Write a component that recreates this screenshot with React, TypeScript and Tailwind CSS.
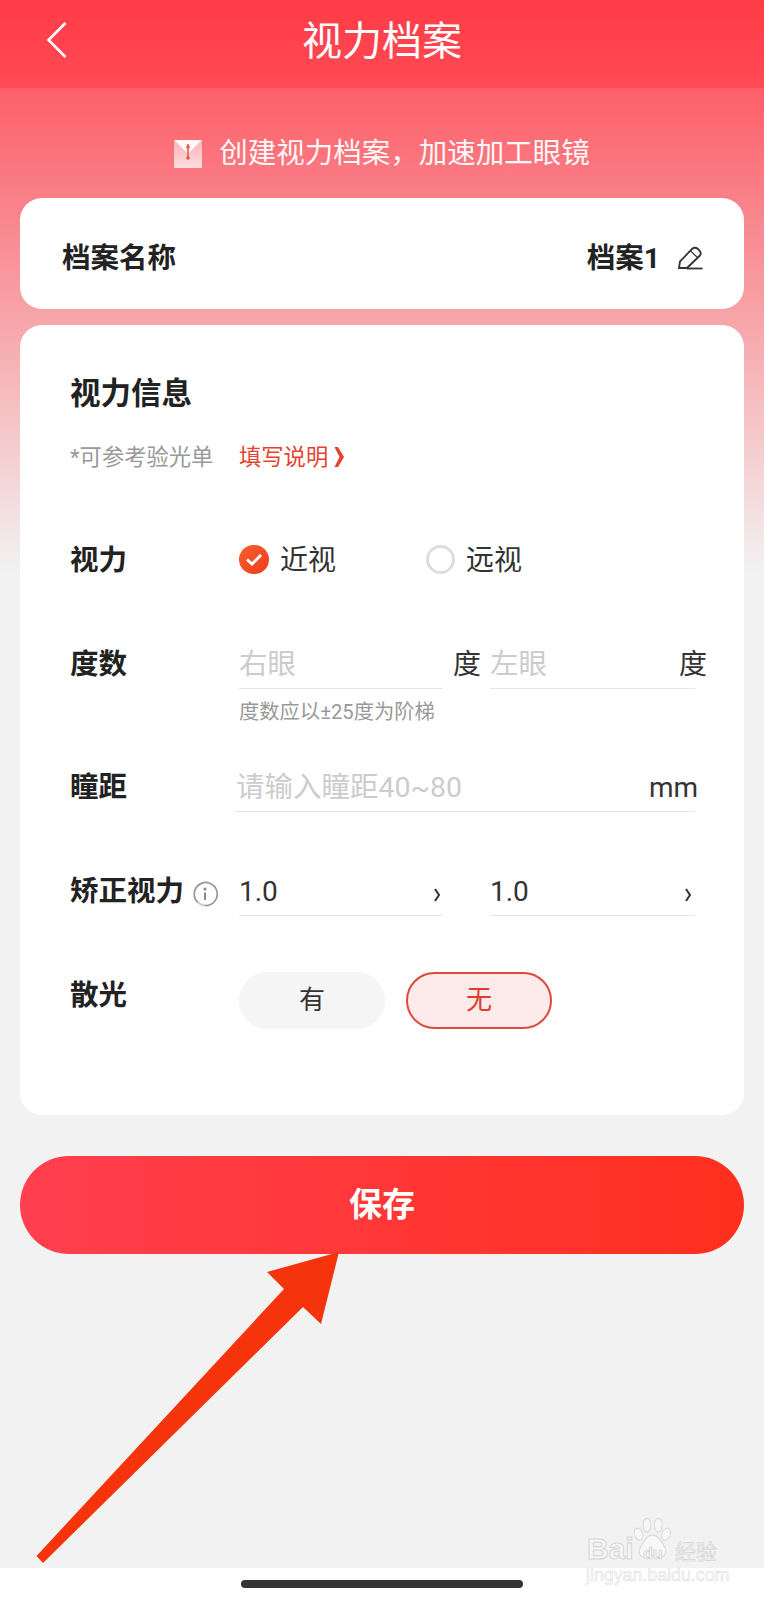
import React from 'react';

const cjk = "font-['Roboto','Noto_Sans_CJK_SC',sans-serif]";

const FieldLabel = ({ children }: { children: React.ReactNode }) => (
  <div className="w-[169px] shrink-0 pt-[6px] text-[28.5px] leading-[40px] font-bold text-[#222]">{children}</div>
);

const SmallChevron = () => (
  <svg width="8" height="16" viewBox="0 0 8 16" fill="none" className="mt-[6px]">
    <path d="M2 2 L6 8 L2 14" stroke="#333" strokeWidth="2" />
  </svg>
);

const EnvelopeIcon = () => (
  <svg width="28" height="28" viewBox="0 0 28 28">
    <defs>
      <linearGradient id="env" x1="0" y1="0" x2="0" y2="1">
        <stop offset="0" stopColor="#fdb4b8" />
        <stop offset="1" stopColor="#fde6e7" />
      </linearGradient>
    </defs>
    <rect width="28" height="28" rx="1" fill="url(#env)" />
    <path d="M0 0 H28 L14 14 Z" fill="#fff" />
    <path d="M14 4 V19" stroke="#e8564f" strokeWidth="1.6" />
    <circle cx="14" cy="7" r="1.8" fill="#e8564f" />
    <circle cx="14" cy="18" r="1.8" fill="#e8564f" />
  </svg>
);

const EditIcon = () => (
  <svg width="26" height="24" viewBox="0 0 26 24" fill="none" stroke="#333" strokeWidth="1.8">
    <path d="M2 22 L3 15.5 L15 3 Q18 0.5 21 3 L22.5 4.5 Q25 7.5 22.5 10 L10 22 Z" />
    <path d="M10 22.5 H25.5" />
    <path d="M13.5 5 L20.5 11.5" strokeWidth="1.2" />
  </svg>
);

const InfoIcon = () => (
  <svg width="26" height="26" viewBox="0 0 26 26" fill="none">
    <path d="M6 21.5 A11.5 11.5 0 1 1 13 24.5" stroke="#999" strokeWidth="1.8" />
    <path d="M6 21.5 A11.5 11.5 0 0 0 13 24.5" stroke="#ccc" strokeWidth="1.8" />
    <circle cx="13" cy="8" r="1.5" fill="#888" />
    <path d="M13 11.5 V19" stroke="#888" strokeWidth="2" />
  </svg>
);

const Watermark = () => (
  <div className="absolute left-[586px] top-[1518px] w-[140px] h-[68px]">
    <svg width="42" height="47" viewBox="0 0 64 58" preserveAspectRatio="none" className="absolute left-[46px] top-0" fill="#f7f7f7" stroke="#d9d9d9" strokeWidth="1.5">
      <ellipse cx="10" cy="20" rx="6" ry="8" transform="rotate(-35 10 20)" />
      <ellipse cx="23" cy="9" rx="6" ry="8.5" />
      <ellipse cx="40" cy="9" rx="6" ry="8.5" />
      <ellipse cx="52" cy="20" rx="6" ry="8" transform="rotate(35 52 20)" />
      <path d="M31 21 C40 21 46 30 50 36 C55 44 48 50 40 48 C34 47 28 47 22 48 C14 50 8 44 13 36 C17 30 22 21 31 21 Z" />
    </svg>
    <div className="absolute left-[1px] top-[11px] text-[30px] leading-[40px] font-bold text-[#f6f6f6] font-['Liberation_Sans',sans-serif] [-webkit-text-stroke:1px_#d5d5d5]">Bai</div>
    <div className="absolute left-[57px] top-[26px] text-[16px] leading-[20px] font-bold text-[#f6f6f6] font-['Liberation_Sans',sans-serif] [-webkit-text-stroke:0.7px_#d0d0d0]">du</div>
    <div className="absolute left-[89px] top-[17px] text-[21px] leading-[30px] text-[#f6f6f6] font-['Noto_Sans_CJK_SC',sans-serif] [-webkit-text-stroke:0.7px_#d5d5d5]">经验</div>
    <div className="absolute left-0 top-[45px] text-[17.8px] leading-[24px] text-white font-['Liberation_Sans',sans-serif] [-webkit-text-stroke:0.6px_#dedede]">jingyan.baidu.com</div>
  </div>
);

export default function App() {
  return (
    <div className={`relative w-full h-[1600px] flex flex-col overflow-hidden bg-[#f2f2f2] ${cjk}`}>
      {/* 顶部导航 */}
      <header className="relative shrink-0 h-[88px] flex items-center justify-center bg-[linear-gradient(180deg,#ff3b46,#ff4a55)]">
        <svg width="22" height="38" viewBox="0 0 22 38" fill="none" className="absolute left-[46px] top-[21px]">
          <path d="M19.5 2 L2.5 19 L19.5 36" stroke="#fff" strokeWidth="2.6" />
        </svg>
        <h1 className="text-[40px] leading-[56px] font-normal text-white mb-[4px]">视力档案</h1>
      </header>

      {/* 内容 */}
      <main className="flex-1 flex flex-col px-[20px] bg-[linear-gradient(180deg,#fe5f68_0px,#f98088_110px,#f7a5a9_232px,#f2f2f2_484px)]">
        <div className="mt-[46px] h-[40px] flex items-center justify-center gap-[17px] text-[28.5px] text-[#fff] opacity-95">
          <EnvelopeIcon />
          <span>创建视力档案，加速加工眼镜</span>
        </div>

        <section className="mt-[24px] h-[111px] bg-white rounded-[22px] flex items-center justify-between pl-[42px] pr-[41px] pt-[12px]">
          <span className="text-[28.5px] font-bold text-[#222]">档案名称</span>
          <div className="flex items-center gap-[17px]">
            <span className="text-[28.5px] font-bold text-[#222]">档案1</span>
            <span className="-mt-[4px]"><EditIcon /></span>
          </div>
        </section>

        <section className="mt-[16px] h-[790px] bg-white rounded-[22px] pl-[50px] pt-[49px]">
          <h2 className="text-[30.5px] leading-[40px] font-bold text-[#222]">视力信息</h2>

          <div className="mt-[28px] h-[30px] flex items-center text-[22.3px] leading-[30px]">
            <span className="w-[169px] text-[#999]">*可参考验光单</span>
            <span className="text-[#e5432f]">填写说明</span>
            <svg width="10" height="20" viewBox="0 0 10 20" className="ml-[6px]">
              <path d="M0.5 0 H4 L10 10 L4 20 H0.5 L5.5 10 Z" fill="#e5432f" />
            </svg>
          </div>

          <div className="mt-[65px] flex items-center">
            <div className="w-[169px] shrink-0 pt-[4px] text-[28.5px] leading-[40px] font-bold text-[#222]">视力</div>
            <span className="w-[30px] h-[29px] rounded-full bg-[linear-gradient(135deg,#fa5f2b,#ee3d1e)] flex items-center justify-center">
              <svg width="18" height="15" viewBox="0 0 18 15" fill="none">
                <path d="M2 7.5 L7 12 L16 3" stroke="#fff" strokeWidth="3" />
              </svg>
            </span>
            <span className="ml-[11px] pt-[4px] text-[28px] leading-[40px] text-[#333]">近视</span>
            <span className="ml-[90px] w-[29px] h-[29px] rounded-full border-[3px] border-[#ddd]" />
            <span className="ml-[11px] pt-[4px] text-[28px] leading-[40px] text-[#333]">远视</span>
          </div>

          <div className="mt-[58px] flex items-start">
            <FieldLabel>度数</FieldLabel>
            <div className="w-[204px] pt-[6px] pb-[3px] border-b border-[#e5e5e5] text-[28.5px] leading-[40px] text-[#ccc]">右眼</div>
            <div className="w-[47px] pt-[6px] pl-[10px] text-[28px] leading-[40px] text-[#333]">度</div>
            <div className="relative w-[205px] pt-[6px] pb-[3px] border-b border-[#e5e5e5] text-[28.5px] leading-[40px] text-[#ccc]">
              左眼
              <span className="absolute left-[189px] top-[6px] text-[28px] text-[#333]">度</span>
            </div>
          </div>
          <div className="mt-[9px] ml-[169px] text-[20.3px] leading-[28px] text-[#999]">度数应以±25度为阶梯</div>

          <div className="mt-[36px] flex items-start">
            <FieldLabel>瞳距</FieldLabel>
            <div className="-ml-[3px] w-[459px] pt-[6px] pb-[3px] border-b border-[#e5e5e5] flex justify-between text-[28.5px] leading-[40px]">
              <span className="text-[#ccc]">请输入瞳距40~80</span>
              <span className="text-[#333] -mr-[3px] text-[28px]">mm</span>
            </div>
          </div>

          <div className="mt-[54px] flex items-start">
            <div className="w-[169px] shrink-0 pt-[6px] flex items-center gap-[8px]">
              <span className="text-[28.5px] leading-[40px] font-bold text-[#222] whitespace-nowrap">矫正视力</span>
              <span className="mt-[4px]"><InfoIcon /></span>
            </div>
            <div className="w-[204px] pt-[6px] pb-[3px] border-b border-[#e5e5e5] flex items-center justify-between pr-[2px] text-[28px] leading-[40px] text-[#333]">
              <span>1.0</span>
              <SmallChevron />
            </div>
            <div className="ml-[47px] w-[205px] pt-[6px] pb-[3px] border-b border-[#e5e5e5] flex items-center justify-between pr-[3px] text-[28px] leading-[40px] text-[#333]">
              <span>1.0</span>
              <SmallChevron />
            </div>
          </div>

          <div className="mt-[56px] flex items-start">
            <div className="-mt-[2px]"><FieldLabel>散光</FieldLabel></div>
            <div className="w-[146px] h-[57px] rounded-full bg-[#f5f5f5] flex items-center justify-center text-[26px] text-[#333]">有</div>
            <div className="ml-[21px] w-[146px] h-[57px] rounded-full bg-[#fdeaea] border-2 border-[#df4a3e] flex items-center justify-center text-[26px] text-[#e5392c]">无</div>
          </div>
        </section>

        <button className="mt-[41px] h-[98px] rounded-full bg-[linear-gradient(90deg,#ff3f4f,#ff2f1e)] text-white text-[33px] font-bold">保存</button>
      </main>

      {/* 底部指示条 */}
      <footer className="shrink-0 h-[32px] bg-white flex items-center justify-center">
        <div className="w-[282px] h-[8px] rounded-full bg-[#333]" />
      </footer>

      {/* 标注箭头 */}
      <svg width="764" height="1600" viewBox="0 0 764 1600" className="absolute left-0 top-0 pointer-events-none">
        <polygon points="339,1252 267,1272 284,1289 36.5,1556 43,1563 303,1307 321,1324" fill="#f6340c" />
      </svg>
      <Watermark />
    </div>
  );
}
